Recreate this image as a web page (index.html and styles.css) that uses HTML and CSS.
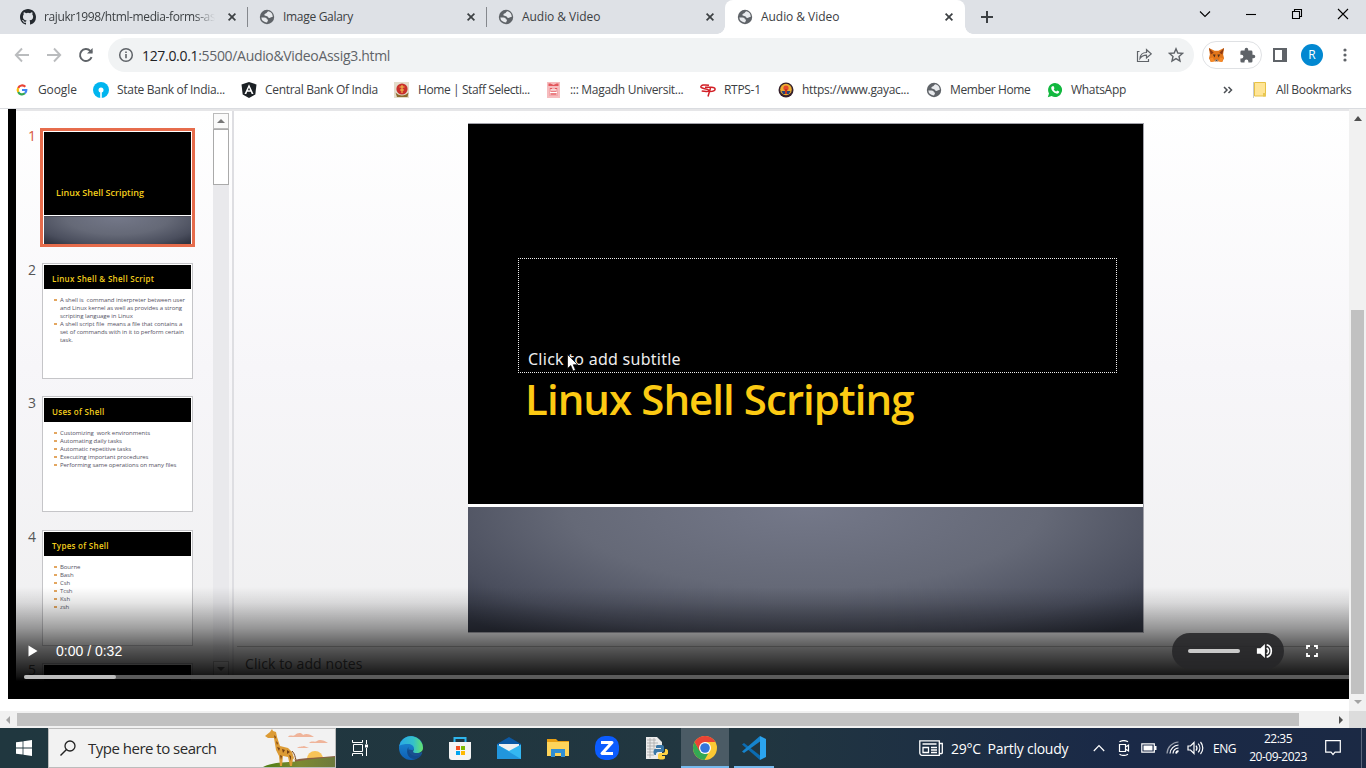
FILE: index.html
```html
<!DOCTYPE html>
<html lang="en">
<head>
<meta charset="utf-8">
<title>Audio &amp; Video</title>
<link rel="stylesheet" href="styles.css">
</head>
<body>
<svg class="defs" width="0" height="0">
  <symbol id="globe" viewBox="0 0 16 16"><circle cx="8" cy="8" r="7.200" fill="#5f6368"/><path d="M9.300 2.300C8 2.600 8.200 4 7.200 4.300 5.300 4.600 5 6 5.900 6.700c.7.500 2 .2 2.700.9.700.6.600 1.300 1.700 1.300 1.500 0 1.400-1.200 3.400-.8A5.700 5.700 0 0 0 9.300 2.300Z" fill="#e8eaed"/><path d="M2.300 8.400h3.200c1.800 0 2.300.7 2.300 1.900 1.400.1 1.500.9.900 1.600-.5.500-.3 1-.7 1.700A5.700 5.700 0 0 1 2.300 8.400Z" fill="#e8eaed"/></symbol>
  <symbol id="close" viewBox="0 0 10 10"><path d="m1.600 1.600 6.800 6.800m0-6.800L1.600 8.400" stroke="#3c4043" stroke-width="1.700"/></symbol>
</svg>

<header class="tabs">
  <div class="tab first">
    <svg class="fav" viewBox="0 0 16 16"><path fill="#24292f" d="M8 0C3.580 0 0 3.580 0 8c0 3.540 2.290 6.530 5.470 7.590.4.070.55-.17.55-.38v-1.490c-2.010.37-2.530-.49-2.690-.94-.09-.23-.48-.94-.82-1.130-.28-.15-.68-.52-.01-.53.63-.01 1.080.58 1.230.82.72 1.210 1.870.87 2.330.66.07-.52.28-.87.51-1.070-1.780-.2-3.640-.89-3.640-3.950 0-.87.31-1.590.82-2.150-.08-.2-.36-1.020.08-2.120 0 0 .67-.21 2.200.82a7.600 7.600 0 0 1 4 0c1.530-1.040 2.200-.82 2.200-.82.44 1.100.16 1.920.08 2.120.51.56.82 1.270.82 2.150 0 3.070-1.870 3.750-3.650 3.950.29.25.54.73.54 1.480v2.200c0 .21.15.46.55.38A8 8 0 0 0 16 8c0-4.420-3.580-8-8-8Z"/></svg>
    <span class="tab-title fade">rajukr1998/html-media-forms-as</span>
    <svg class="x"><use href="#close"/></svg>
  </div>
  <div class="tab"><svg class="fav"><use href="#globe"/></svg><span class="tab-title">Image Galary</span><svg class="x"><use href="#close"/></svg></div>
  <div class="tab"><svg class="fav"><use href="#globe"/></svg><span class="tab-title av">Audio &amp; Video</span><svg class="x"><use href="#close"/></svg></div>
  <div class="tab active"><svg class="fav"><use href="#globe"/></svg><span class="tab-title av">Audio &amp; Video</span><svg class="x"><use href="#close"/></svg></div>
  <svg class="plus" viewBox="0 0 14 14"><path d="M7 1v12M1 7h12" stroke="#3c4043" stroke-width="2"/></svg>
  <div class="window-buttons">
    <svg viewBox="0 0 12 12"><path d="m1 3.500 5 5 5-5" /></svg>
    <svg viewBox="0 0 12 12"><path d="M1 6.500h10"/></svg>
    <svg viewBox="0 0 12 12"><path d="M1.500 3.500h7v7h-7zM3.500 3.500v-2h7v7h-2"/></svg>
    <svg viewBox="0 0 12 12"><path d="m1 1 10 10M11 1 1 11"/></svg>
  </div>
</header>

<nav class="toolbar">
  <svg class="nav-icon off" viewBox="0 0 16 16"><path d="M15 8H2M8 1.500 1.800 8 8 14.500"/></svg>
  <svg class="nav-icon off" viewBox="0 0 16 16"><path d="M1 8h13M8 1.500 14.200 8 8 14.500"/></svg>
  <svg class="nav-icon" viewBox="0 0 16 16"><path d="M13.600 10.200A6 6 0 1 1 12.300 3.800L14 5.500"/><path d="M14.600 1v5.600H9z" fill="#5f6368" stroke="none"/></svg>
  <div class="omnibox">
    <svg class="info" viewBox="0 0 16 16"><circle cx="8" cy="8" r="6.300" fill="none" stroke="#5f6368" stroke-width="1.500"/><path d="M8 7v4.200M8 4.400v1.600" stroke="#5f6368" stroke-width="1.600"/></svg>
    <span class="url"><b>127.0.0.1</b>:5500/Audio&amp;VideoAssig3.html</span>
    <svg class="share" viewBox="0 0 16 16"><path d="M3.500 4.500H1.500v10h11v-2.500M4 11.500c.3-3.700 2.700-6 6.500-6V2.700l4.700 4.200-4.700 4V8.200c-2.800 0-4.900.9-6.500 3.300z"/></svg>
    <svg class="star" viewBox="0 0 16 16"><path d="m8 1.800 1.800 4.200 4.700.4-3.500 3.100 1 4.500L8 11.600 4 14l1-4.500L1.500 6.400 6.200 6z"/></svg>
  </div>
  <div class="extensions">
    <svg viewBox="0 0 18 18"><path d="m1 1 6 3h4l6-3-1 7 1 4-2 4-4-1-1 1H8l-1-1-4 1-2-4 1-4z" fill="#e2761b"/><path d="m1 1 5 5-3 2zM17 1l-5 5 3 2z" fill="#8f3b12"/><path d="M5 8h3l-1 3zm8 0h-3l1 3z" fill="#56321d"/><path d="m7 14 2-1 2 1-1 2H8z" fill="#d7c1b3"/><path d="M8 13.500h2v1H8z" fill="#161616"/><path d="m2 12 3-1 2 4-4 1zM16 12l-3-1-2 4 4 1z" fill="#f68a28"/></svg>
    <svg viewBox="0 0 24 24"><path fill="#5f6368" d="M20.500 11H19V7a2 2 0 0 0-2-2h-4V3.500a2.500 2.500 0 0 0-5 0V5H4a2 2 0 0 0-2 2v3.800h1.500a2.700 2.700 0 0 1 0 5.400H2V20a2 2 0 0 0 2 2h3.800v-1.500a2.700 2.700 0 0 1 5.400 0V22H17a2 2 0 0 0 2-2v-4h1.500a2.500 2.500 0 0 0 0-5z"/></svg>
  </div>
  <svg class="side" viewBox="0 0 14 14"><path d="M1 1h12v12H1z" fill="none" stroke="#5f6368" stroke-width="2"/><path d="M9 1h4v12H9z" fill="#5f6368"/></svg>
  <span class="avatar">R</span>
  <svg class="dots" viewBox="0 0 4 14"><circle cx="2" cy="2" r="1.600"/><circle cx="2" cy="7" r="1.600"/><circle cx="2" cy="12" r="1.600"/></svg>
</nav>

<div class="bookmarks">
  <a class="bm google"><svg viewBox="0 0 16 16" fill="none" stroke-width="2.200"><path d="M11.300 4.800A4.300 4.300 0 0 0 4.200 6" stroke="#ea4335"/><path d="M4.200 6a4.300 4.300 0 0 0 0 4" stroke="#fbbc05"/><path d="M4.200 10a4.300 4.300 0 0 0 6.700 1.300" stroke="#34a853"/><path d="M10.900 11.300A4.300 4.300 0 0 0 12.300 8H8" stroke="#4285f4"/></svg>Google</a>
  <a class="bm sbi"><svg viewBox="0 0 16 16"><circle cx="8" cy="8" r="8" fill="#00b5ef"/><circle cx="8" cy="8" r="2.500" fill="#fff"/><path d="M7.200 8h1.600v8H7.200z" fill="#fff"/></svg>State Bank of India...</a>
  <a class="bm cbi"><svg viewBox="0 0 16 16"><path d="m8 0 7.500 2.500-1.200 10L8 16l-6.300-3.500L.5 2.500z" fill="#1c2125"/><path d="m8 2.200 4.500 9.800h-1.800l-.9-2.200H6.200L5.300 12H3.500zM8 5.500 6.900 8.300h2.200z" fill="#fff"/></svg>Central Bank Of India</a>
  <a class="bm ssc"><svg viewBox="0 0 16 16"><path d="M0 0h15v16H0z" fill="#e3dccb"/><circle cx="8" cy="7" r="5.600" fill="#c9302b"/><path d="M5.500 5h5M6 8h4M8 3v8" stroke="#f3c14d" stroke-width="1.100"/><path d="M1.500 10.500c4 4 9 4 13 0l-1 4.500H3z" fill="#8c6b2d"/></svg>Home | Staff Selecti...</a>
  <a class="bm mu"><svg viewBox="0 0 16 16"><path d="M1 0h13v16H1z" fill="#f6bcbe"/><path d="M2.500 1.500h2l3 1.500 3-1.500h2v2.500h-10z" fill="#e2575c"/><path d="M3 6h9v8H3z" fill="#f3a9ac"/><path d="M4 6.500h2M9 6.500h2M5 9h5M5 12h5" stroke="#e2575c"/><path d="M5 7.500h5v1H5zM4 10h7v1H4z" fill="#fff"/></svg>::: Magadh Universit...</a>
  <a class="bm rtps"><svg viewBox="0 0 16 16" fill="none" stroke="#d21f26" stroke-width="1.500"><path d="M9 3.300C5 2.500 .5 3 .9 5 1.500 7 7.500 6.300 8.700 8.200c.6 1.500-3 1.400-7 .8M5 5.300h6.500c5 0 5 4.200-1.500 4.200M10.500 6 8 14.500"/></svg>RTPS-1</a>
  <a class="bm gaya"><svg viewBox="0 0 16 16"><circle cx="8" cy="8" r="7.500" fill="#35202c"/><circle cx="8" cy="7.500" r="5.800" fill="#edae32"/><path d="M3.500 9h9L11 12H5z" fill="#25447e"/><circle cx="8" cy="6" r="2.600" fill="#e5482c"/><path d="M7 7h2v5H7z" fill="#c33524"/></svg>https://www.gayac...</a>
  <a class="bm member"><svg><use href="#globe"/></svg>Member Home</a>
  <a class="bm wa"><svg viewBox="0 0 16 16"><path d="M8 1a7 7 0 1 1-3.400 13.100L.8 15.300 2 11.500A7 7 0 0 1 8 1z" fill="#12b83f"/><path d="M5.300 4.200 6.500 4l1 2.200-.8 1c.6 1.200 1.400 1.900 2.600 2.400l.9-1 2 1c.2 1.500-1.400 2.300-2.800 2C6.500 10.800 4.300 8.300 4.200 6c0-.8.500-1.500 1.100-1.800z" fill="#fff"/></svg>WhatsApp</a>
  <svg class="more" viewBox="0 0 10 8"><path d="m1 1 3 3-3 3M5.500 1l3 3-3 3" fill="none" stroke="#4b4f54" stroke-width="1.500"/></svg>
  <span class="rule"></span>
  <a class="bm all"><svg viewBox="0 0 12 15"><path d="M.5.500h11v13.500H.5z" fill="#ffe596" stroke="#e6c145"/><path d="M9 11h3v3.500H9z" fill="#e9c752"/></svg>All Bookmarks</a>
</div>

<main class="page">
  <div class="viewport">
    <div class="video">
      <div class="app">
        <aside class="panel">
          <ol class="thumbs">
            <li class="sel"><i>1</i><div class="thumb cover"><h3>Linux Shell Scripting</h3><div class="band"></div></div></li>
            <li><i>2</i><div class="thumb"><h3>Linux Shell &amp; Shell Script</h3><p>A shell is&nbsp; command interpreter between user<br>and Linux kernel as well as provides a strong<br>scripting language in Linux</p><p>A shell script file&nbsp; means a file that contains a<br>set of commands with in it to perform certain<br>task.</p></div></li>
            <li><i>3</i><div class="thumb"><h3>Uses of Shell</h3><p>Customizing&nbsp; work environments</p><p>Automating daily tasks</p><p>Automatic repetitive tasks</p><p>Executing important procedures</p><p>Performing same operations on many files</p></div></li>
            <li><i>4</i><div class="thumb"><h3>Types of Shell</h3><p>Bourne</p><p>Bash</p><p>Csh</p><p>Tcsh</p><p>Ksh</p><p>zsh</p></div></li>
            <li><i>5</i><div class="thumb"><h3></h3></div></li>
          </ol>
          <div class="panel-scroll"><span class="up"></span><span class="grip"></span><span class="down"></span></div>
        </aside>
        <section class="stage">
          <div class="slide">
            <div class="slide-top">
              <div class="subtitle">Click to add subtitle</div>
              <h1>Linux Shell Scripting</h1>
            </div>
            <div class="band"></div>
          </div>
          <div class="notes">Click to add notes</div>
        </section>
      </div>
      <div class="shade"></div>
      <svg class="cursor" viewBox="0 0 12 18"><path d="M.5.500v14l3.300-3 2.200 5.500 2.500-1-2.300-5.300h4.500z" fill="#fff" stroke="#000" stroke-width=".7"/></svg>
      <div class="controls">
        <div class="buttons">
          <svg class="play" viewBox="0 0 10 12"><path d="M.5.500v11l9-5.500z" fill="#fff"/></svg>
          <span class="time">0:00 / 0:32</span>
          <div class="volume"><span></span>
            <svg viewBox="0 0 18 18"><path d="M1 6v6h4l5 5V1L5 6z" fill="#fff"/><path d="M12 5.500a4 4 0 0 1 0 7M12 2a7.300 7.300 0 0 1 0 14" fill="none" stroke="#fff" stroke-width="1.900"/></svg></div>
          <svg class="full" viewBox="0 0 12 12"><path d="M1 4V1h3M8 1h3v3M11 8v3H8M4 11H1V8" fill="none" stroke="#fff" stroke-width="1.800"/></svg>
        </div>
        <div class="track"><span></span></div>
      </div>
    </div>
  </div>
  <div class="vbar"><i class="tri-up"></i><span></span><i class="tri-down"></i></div>
</main>
<div class="hbar"><i class="tri-left"></i><span></span><i class="tri-right"></i><b></b></div>

<footer class="taskbar">
  <div class="start"><svg viewBox="0 0 16 16"><path d="m0 2.300 6.600-.9v6.200H0zm7.400-1L16 0v7.600H7.400zM0 8.400h6.600v6.200L0 13.700zm7.400 0H16V16l-8.600-1.200z" fill="#fff"/></svg></div>
  <div class="search">
    <svg class="lens" viewBox="0 0 16 16"><circle cx="10" cy="6" r="5" fill="none" stroke="#222" stroke-width="1.300"/><path d="M6.500 9.500.5 15.500" stroke="#222" stroke-width="1.400"/></svg>
    <span>Type here to search</span>
    <svg class="giraffe" viewBox="0 0 72 38">
      <defs><linearGradient id="hill"><stop offset="0" stop-color="#4b7d12"/><stop offset=".5" stop-color="#7d8a31"/><stop offset="1" stop-color="#6d7a3d"/></linearGradient></defs>
      <path d="M25 8c2-3 5 0 7-2s6-3 8 0c3-2 7-1 11 2zM46 14c3-3 6 0 8-2s7-1 11 2zM34 19c2-2 5-1 7-2l5 2z" fill="#efb49a"/>
      <circle cx="52" cy="30" r="8" fill="#f8c458"/><path d="M32 31c10-3 25-2 40-4v11H32z" fill="#8c5f42"/>
      <path d="M0 38c12-6 25-4 36-6s23-3 36-4v10z" fill="url(#hill)"/>
      <path d="M2 7 7 3l2-3 1 2 3 1 1 5 3 9 8 2 4 4 3 9-2-3-1 8h-2l-2-9-5-1-1 10h-2l-1-10-3-6-2-12-6 0z" fill="#dc9b35"/>
      <path d="m11 6 2 2-1 2zm2 6 2 2-1 2zm1 6 3 1-1 3zm5 2 3 1-2 3zm5 1 3 2-3 2zm-7 5 2 1-1 4zm9 0 2 1v5z" fill="#754016"/><path d="M29 22c3 3 3 6 4 9" fill="none" stroke="#754016"/>
    </svg>
  </div>
  <div class="app-icon first"><svg class="view" viewBox="0 0 16 16" fill="none" stroke="#fff"><path d="M.5 0v2.500h10V0M.5 16v-2.500h10V16M1.500 4.500h9v7h-9zM14.500 0v4M14.500 8v8"/><path d="M13 4.500h3v3h-3z" fill="#fff" stroke="none"/></svg></div>
  <div class="app-icon"><svg viewBox="0 0 24 24"><defs><linearGradient id="eg"><stop offset="0" stop-color="#28a9e8"/><stop offset=".6" stop-color="#35c1c8"/><stop offset="1" stop-color="#65e36c"/></linearGradient><linearGradient id="eb" x2="0" y2="1"><stop stop-color="#1c8fd9"/><stop offset="1" stop-color="#0f5fb4"/></linearGradient></defs><circle cx="12" cy="12" r="12" fill="url(#eb)"/><path d="M9.300 11C6 17 10 24 17 23c3-1 5-3 6-5-5 3-14 1-13.700-7z" fill="#124a8c"/><path d="M14 14.500c0 4 6 4.500 10 1.500v-4h-8z" fill="#21363f"/><path d="M10 13.500c-.5 4.500 4.500 8.500 11.500 5.500l2-3.500c-4 2.500-9 1.500-9.300-1.200z" fill="#1a4f8f"/><path d="M.2 10A12 12 0 0 1 24 12c0 3.500-3 5-6 5-3 0-4.700-1-3.500-2.500C16 12 14 8 9.500 8S2 8.500.2 10z" fill="url(#eg)"/></svg></div>
  <div class="app-icon"><svg viewBox="0 0 24 24"><path d="M6.500 7V2h11v5" fill="none" stroke="#2eb6ee" stroke-width="2"/><path d="M1 6h22v15a3 3 0 0 1-3 3H4a3 3 0 0 1-3-3z" fill="#f4f4f4"/><path d="M8 10h4v4H8z" fill="#f25022"/><path d="M13 10h4v4h-4z" fill="#7fba00"/><path d="M8 15h4v4H8z" fill="#00a4ef"/><path d="M13 15h4v4h-4z" fill="#ffb900"/></svg></div>
  <div class="app-icon"><svg viewBox="0 0 24 24"><path d="m0 8 12-7 12 7v7H0z" fill="#0c59a4"/><path d="M2 8h20v3l-10 6L2 11z" fill="#f1f1f1"/><path d="M0 8.500 12 15 24 8.500V23H0z" fill="#34b7f1"/><path d="m0 8.500 24 14.500H0z" fill="#2196dd"/></svg></div>
  <div class="app-icon"><svg viewBox="0 0 24 24"><path d="M1 3h9l2 2h11v15H1z" fill="#e9a013"/><path d="M1 6h22v14H1z" fill="#fed45a"/><path d="M5 13h14v8h-4v-4H9v4H5z" fill="#318fd4"/></svg></div>
  <div class="app-icon"><svg viewBox="0 0 24 24"><rect width="24" height="24" rx="10" fill="#0b5cff"/><path d="M6 6.500h11L7 17.500h11" fill="none" stroke="#fff" stroke-width="3" stroke-linejoin="round"/></svg></div>
  <div class="app-icon"><svg viewBox="0 0 24 24"><path d="M2 1h11l5 5v17H2z" fill="#ececec"/><path d="M3 4h9M3 7h11M3 10h12M3 13h9M3 16h8M3 19h7M6 2v20M10 2v10" stroke="#aaa" stroke-width=".8"/><path d="M13 9h5c1.500 0 2 1 2 2v3c0 1.500-1 2-2 2h-4c-1 0-2 1-2 2v1h-1c-2 0-2-6 0-6h6v-1h-5v-2z" fill="#3b78a8"/><path d="M21 13h1c3 0 3 6 0 6h-4v1h3v2c0 2-7 2-7 0v-3c0-1 1-2 2-2h3c1 0 2-1 2-2z" fill="#ffd343"/></svg></div>
  <div class="app-icon current"><svg viewBox="0 0 24 24"><circle cx="12" cy="12" r="12" fill="#fcc934"/><path d="M1.600 6 7 15l5 2.500 3 .5-3.500 6A12 12 0 0 1 1.600 6z" fill="#34a853"/><path d="M1.600 6A12 12 0 0 1 22.400 6H12L6.500 15z" fill="#ea4335"/><circle cx="12" cy="12" r="6" fill="#fff"/><circle cx="12" cy="12" r="4.800" fill="#3475dc"/></svg></div>
  <div class="app-icon open"><svg viewBox="0 0 24 24"><path d="M0 8.500 2 7l16 12.500V24z" fill="#0b6cb2"/><path d="M0 15.500 18 0v5.500L2 17z" fill="#1684cd"/><path d="m18 0 6 3v18l-6 3z" fill="#2ba4ef"/></svg></div>
  <div class="tray">
    <svg class="news" viewBox="0 0 24 16" fill="none" stroke="#fff" stroke-width="1.300"><path d="M.8.800h19.500v14.500H3a2.200 2.200 0 0 1-2.200-2.200zM20.300 3.500h3v9.500a2 2 0 0 1-3 0M3.500 4h14M12 7.500h6M12 10h6M12 12.500h6M4 7.500h5.500v5H4z"/></svg>
    <span class="weather">29°C&nbsp; Partly cloudy</span>
    <svg class="chev" viewBox="0 0 12 12"><path d="m.8 9 5.200-5.500L11.200 9"/></svg>
    <svg class="meet" viewBox="0 0 14 16"><path d="M2.500 4.500h6v7h-6zM8.500 7l3-2v6l-3-2M2.500 1.800c2.500-1.500 6-1.500 8.500 0M2.500 14.200c2.500 1.500 6 1.500 8.500 0"/></svg>
    <svg class="batt" viewBox="0 0 16 10"><path d="M.8.800h12.500v8.400H.8z"/><path d="M2.500 2.500h9v5h-9zM13.500 3h2v4h-2z" fill="#fff" stroke="none"/></svg>
    <svg class="wifi" viewBox="0 0 14 14"><path d="M1 12.500A12 12 0 0 1 12.500 1" opacity=".55"/><path d="M4 12.500a9 9 0 0 1 8.500-8.500M7 12.500a6 6 0 0 1 5.500-5.500"/><path d="M10 12.500a3 3 0 0 1 2.500-2.500" stroke-width="2"/></svg>
    <svg class="vol" viewBox="0 0 17 14"><path d="M1 5v4h2.500L7 12.500v-11L3.500 5zM9 4.500a4 4 0 0 1 0 5M11.200 2.700a6.500 6.500 0 0 1 0 8.600M13.500 1a9 9 0 0 1 0 12"/></svg>
    <span class="lang">ENG</span>
    <span class="clock">22:35<br><em>20-09-2023</em></span>
    <svg class="note" viewBox="0 0 16 16"><path d="M.700.700h14.600v11.500H10L8 14.500l-2-2.300H.7z"/></svg>
  </div>
</footer>
</body>
</html>
```
FILE: styles.css
```css
* { box-sizing: border-box; }
body { margin: 0; width: 1366px; height: 768px; overflow: hidden; background: #fff; font-family: "Open Sans", "Noto Sans", sans-serif; font-size: 12px; color: #3c4043; }
.defs { position: absolute; }
svg { display: block; flex: none; }
h1, h3, p, ol { margin: 0; padding: 0; font-weight: normal; }

/* tab strip */
.tabs { display: flex; height: 34px; background: #dee1e6; align-items: center; }
.tab { display: flex; align-items: center; width: 239px; height: 34px; padding-left: 12px; position: relative; }
.tab.first { width: 247px; padding-left: 20px; }
.tab + .tab::before { content: ""; position: absolute; left: 0; top: 7px; width: 1px; height: 20px; background: #85888d; }
.tab.active { background: #fff; width: 240px; padding-left: 12px; border-radius: 8px 8px 0 0; }
.tab.active::before { top: auto; bottom: 0; left: -8px; width: 8px; height: 8px; background: radial-gradient(circle at 0 0, transparent 7.5px, #fff 8px); }
.tab.active::after { content: ""; position: absolute; bottom: 0; right: -8px; width: 8px; height: 8px; background: radial-gradient(circle at 100% 0, transparent 7.5px, #fff 8px); }
.fav { width: 16px; height: 16px; }
.tab-title { margin-left: 8px; width: 171px; white-space: nowrap; letter-spacing: -.3px; line-height: 20px; }
.tab-title.av { letter-spacing: -.05px; }
.tab-title.fade { letter-spacing: -.38px; -webkit-mask-image: linear-gradient(90deg, #000 88%, transparent); mask-image: linear-gradient(90deg, #000 88%, transparent); }
.x { width: 10px; height: 10px; margin-left: 12px; }
.plus { width: 14px; height: 14px; margin-left: 15px; }
.window-buttons { display: flex; gap: 34px; margin: -6px 17px 0 auto; }
.window-buttons svg { width: 12px; height: 12px; fill: none; stroke: #000; stroke-width: 1.1; }

/* toolbar */
.toolbar { display: flex; height: 42px; align-items: center; padding-left: 14px; }
.nav-icon { width: 16px; height: 16px; margin-right: 16px; fill: none; stroke: #5f6368; stroke-width: 1.9; }
.nav-icon.off { stroke: #babcbe; }
.omnibox { display: flex; align-items: center; width: 1086px; height: 34px; margin-left: -2px; padding: 0 10px; background: #f1f3f4; border-radius: 17px; }
.info { width: 16px; height: 16px; }
.url { flex: 1; margin-left: 8px; font-size: 14px; letter-spacing: -.32px; color: #5f6368; }
.url b { font-weight: normal; color: #202124; }
.share { width: 16px; height: 16px; margin-right: 16px; fill: none; stroke: #5f6368; stroke-width: 1.2; }
.star { width: 16px; height: 16px; fill: none; stroke: #5f6368; stroke-width: 1.4; }
.extensions { display: flex; align-items: center; justify-content: space-between; width: 60px; height: 28px; margin-left: 8px; padding: 0 5px; border: 1px solid #dfe1e4; border-radius: 14px; }
.extensions svg { width: 17px; height: 17px; }
.side { width: 14px; height: 14px; margin-left: 11px; }
.avatar { width: 22px; height: 22px; margin-left: 14px; border-radius: 50%; background: #0288d1; color: #fff; font-size: 12px; line-height: 22px; text-align: center; }
.dots { width: 4px; height: 14px; margin-left: 20px; fill: #5f6368; }

/* bookmarks */
.bookmarks { display: flex; align-items: center; height: 33px; padding: 0 0 5px 14px; border-bottom: 1px solid #dadce0; white-space: nowrap; }
.bm { display: flex; align-items: center; gap: 8px; letter-spacing: -.3px; flex: none; }
.bm svg { width: 16px; height: 16px; }
.google { width: 79px; letter-spacing: -.1px; }
.sbi { width: 148px; }
.cbi { width: 153px; }
.ssc { width: 152px; letter-spacing: -.4px; }
.mu { width: 154px; }
.rtps { width: 78px; }
.gaya { width: 148px; }
.member { width: 121px; letter-spacing: -.4px; }
.wa { width: 176px; }
.more { width: 10px; height: 8px; }
.rule { width: 1px; height: 16px; margin-left: 20px; background: #c8cacd; }
.all { gap: 10px; letter-spacing: -.35px; }
.bm.all svg { width: 12px; height: 15px; }

/* page area */
.page { display: flex; height: 602px; }
.viewport { width: 1349px; height: 602px; padding-left: 8px; overflow: hidden; }
.video { position: relative; height: 590px; background: #000; padding-left: 8px; }
.app { display: flex; height: 573px; overflow: hidden; border-top: 2px solid #e6e6e8; background: linear-gradient(#fff, #f7f6f9 45%, #f0f0f1 90%); }
.panel { display: flex; width: 218px; border-right: 2px solid #dedee2; }
.thumbs { width: 198px; height: 571px; padding: 17px 0 0 12px; list-style: none; }
.thumbs li { display: flex; height: 133.500px; }
.thumbs i { width: 14px; font-style: normal; font-size: 14px; line-height: 15px; color: #555; }
.thumbs .sel i { color: #d9583c; }
.thumb { width: 151px; height: 116px; margin-top: 1px; padding: 1px; border: 1px solid #c5c5c8; background: #fff; overflow: hidden; }
.thumb h3 { height: 24px; margin-bottom: 7px; padding-left: 8px; background: #000; color: #f3ce1c; font-weight: 600; font-size: 8px; letter-spacing: .29px; line-height: 28px; white-space: nowrap; }
.thumb p { position: relative; padding-left: 16px; font-size: 6px; line-height: 8px; letter-spacing: -.06px; color: #545263; white-space: nowrap; }
.thumb p::before { content: ""; position: absolute; left: 10px; top: 3px; width: 3px; height: 2px; background: #e3a660; }
.sel .thumb { width: 155px; height: 119px; margin: 0 0 0 -2px; padding: 1px; border: 3px solid #e66c4c; }
.sel .thumb h3 { height: 83px; margin: 0; padding-left: 12px; font-size: 9px; letter-spacing: .02px; line-height: 121px; }
.band { background: radial-gradient(ellipse 70% 130% at 50% 0, #747889, #656977 50%, #4a4e5d 82%, #313542 100%); border-top: 1px solid #4c4c58; }
.sel .band { height: 28px; margin-top: 1px; }
.panel-scroll { width: 16px; height: 564px; margin: 2px 3px 0 auto; display: flex; flex-direction: column; background: #e9e9ec; }
.panel-scroll .up, .panel-scroll .down { height: 16px; padding-top: 5px; border: 1px solid #bbb; background: #fafafa; }
.up::after, .down::after { content: ""; display: block; margin: 0 auto; width: 0; border: 4px solid transparent; border-top: 0; border-bottom-color: #777; }
.down::after { transform: rotate(180deg); }
.panel-scroll .grip { height: 56px; border: 1px solid #aaa; background: #fff; }
.panel-scroll .down { margin-top: auto; }
.stage { flex: 1; }
.slide { width: 676px; height: 510px; margin: 12px 0 0 234px; border: 1px solid #a2a2aa; border-left-width: 0; }
.slide-top { height: 380px; padding: 134px 26px 0 50px; background: #000; }
.subtitle { display: flex; align-items: flex-end; height: 115px; padding: 0 0 2px 9px; border: 1px dotted #eee; color: #eee; font-family: "Noto Sans", sans-serif; font-size: 16px; letter-spacing: .26px; }
.slide h1 { padding-left: 7px; color: #fcca13; font-weight: 600; font-size: 42px; letter-spacing: -.95px; line-height: 52px; white-space: nowrap; }
.slide .band { height: 128px; border-top: 3px solid #fff; background-clip: padding-box; }
.slide { margin-left: 234px; }
.panel { flex: none; }
.notes { height: 50px; margin: 13px 0 0 3px; padding: 8px 0 0 8px; border-top: 1px solid #bbb; font-size: 14px; line-height: 17px; letter-spacing: .1px; color: #555; }
.shade { position: absolute; inset: auto 0 0 0; height: 112px; background: linear-gradient(transparent, rgba(0,0,0,.1) 14%, rgba(0,0,0,.38) 37%, rgba(0,0,0,.62) 53%, rgba(0,0,0,.92) 80%, #000 84%); }
.cursor { position: absolute; left: 559px; top: 245px; width: 12px; height: 18px; }
.controls { position: absolute; inset: auto 0 20px 16px; }
.buttons { display: flex; align-items: center; height: 36px; padding-left: 4px; color: #fff; }
.play { width: 10px; height: 12px; }
.time { flex: 1; margin-left: 18px; font: 14px "Liberation Sans", sans-serif; }
.volume { display: flex; align-items: center; justify-content: space-between; width: 112px; height: 36px; padding: 0 11px 0 16px; border-radius: 18px; background: rgba(38,38,40,.88); }
.volume span { width: 52px; height: 4px; border-radius: 2px; background: #c9c9c9; }
.volume svg { width: 18px; height: 16px; }
.full { width: 12px; height: 12px; margin: 0 31px 0 22px; }
.track { height: 4px; margin-top: 6px; background: #5b5b5b; border-radius: 2px 0 0 2px; }
.track span { display: block; width: 92px; height: 4px; border-radius: 2px; background: #bdbdbd; }

/* scrollbars */
.vbar { display: flex; flex-direction: column; align-items: center; width: 17px; background: #f1f1f1; }
.vbar span { width: 13px; height: 384px; margin-top: 189px; background: #c1c1c1; }
.tri-up { margin-top: 7px; border: 4px solid transparent; border-top: 0; border-bottom: 5px solid #505050; }
.tri-down { margin-top: 6px; border: 4px solid transparent; border-bottom: 0; border-top: 4px solid #a3a3a3; }
.hbar { display: flex; align-items: center; height: 17px; background: #f1f1f1; }
.hbar span { width: 1282px; height: 13px; margin-left: 7px; background: #c1c1c1; }
.tri-left { margin-left: 6px; border: 4px solid transparent; border-left: 0; border-right: 4px solid #a3a3a3; }
.tri-right { margin-left: 40px; border: 4px solid transparent; border-right: 0; border-left: 4px solid #505050; }
.hbar b { width: 17px; height: 17px; margin-left: auto; background: #dcdcdc; }

/* taskbar */
.taskbar { display: flex; height: 40px; background: linear-gradient(90deg, #20373f, #213640 55%, #1a2947 82%, #1b2944); }
.start { width: 48px; padding: 12px 16px; }
.start svg { width: 16px; height: 16px; }
.search { display: flex; align-items: center; width: 288px; height: 40px; padding-left: 11px; border: 1px solid #bcbcbc; background: #f2f2f2; color: #2b2b2b; }
.lens { width: 16px; height: 16px; }
.search span { margin-left: 12px; font-size: 15px; letter-spacing: -.5px; white-space: nowrap; }
.giraffe { width: 72px; height: 38px; margin-left: auto; }
.app-icon { display: flex; align-items: center; justify-content: center; width: 49px; height: 40px; }
.app-icon svg { width: 24px; height: 24px; }
.app-icon svg.view { width: 16px; height: 16px; }
.app-icon.first { width: 50px; padding-right: 2px; }
.app-icon.current { width: 48px; margin-left: 1px; background: #4b5b65; border-bottom: 2px solid #76b9ed; padding-top: 2px; }
.open { background: linear-gradient(#76b9ed, #76b9ed) 5px 38px / 40px 2px no-repeat; }
.tray { display: flex; align-items: center; margin-left: auto; padding-right: 4px; color: #fff; white-space: nowrap; }
.tray svg:not(.news) { fill: none; stroke: #fff; stroke-width: 1.2; }
.news { width: 24px; height: 16px; }
.weather { width: 142px; margin-left: 8px; font-size: 14px; letter-spacing: -.25px; }
.chev { width: 12px; height: 12px; }
.meet { width: 14px; height: 16px; margin-left: 12px; }
.batt { width: 16px; height: 10px; margin-left: 10px; }
.wifi { width: 14px; height: 14px; margin-left: 9px; }
.vol { width: 17px; height: 14px; margin-left: 7px; }
.lang { width: 24px; margin-left: 9px; letter-spacing: -.5px; }
.clock { width: 60px; margin-left: 11px; text-align: center; line-height: 18px; letter-spacing: -.5px; }
.clock em { font-style: normal; }
.note { width: 16px; height: 16px; margin: 0 20px 0 17px; }
.tray::after { content: ""; width: 1px; height: 40px; background: #5b667c; }
```
